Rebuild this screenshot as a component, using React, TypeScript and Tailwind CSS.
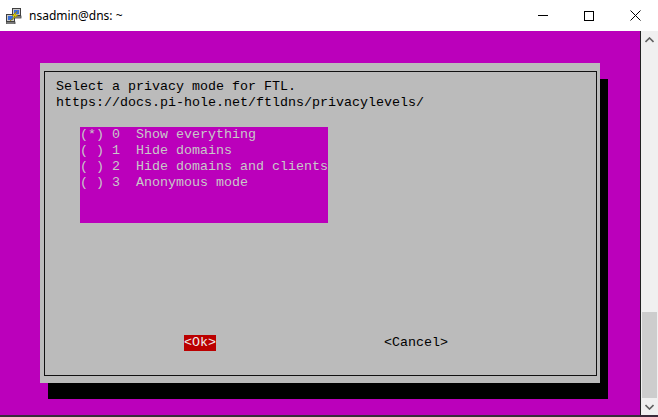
import React from "react";

const PuttyIcon = () => (
  <svg width="16" height="16" viewBox="0 0 16 16">
    <rect x="6.5" y="0.5" width="8" height="7" fill="#c8c8c8" stroke="#404040" />
    <rect x="8" y="2" width="5" height="4" fill="#3a6fd8" />
    <rect x="6" y="8" width="9" height="2" fill="#a0a0a0" stroke="#404040" strokeWidth="0.8" />
    <rect x="0.5" y="6.5" width="8" height="7" fill="#c8c8c8" stroke="#404040" />
    <rect x="2" y="8" width="5" height="4" fill="#3a6fd8" />
    <rect x="0" y="14" width="9" height="2" fill="#a0a0a0" stroke="#404040" strokeWidth="0.8" />
    <path d="M11 3 L6 8 L9 8 L4 13 L12 7 L9 7 Z" fill="#f5e400" stroke="#8a7a00" strokeWidth="0.6" />
  </svg>
);

const TitleBar = () => (
  <div className="h-[31px] bg-white flex items-center">
    <div className="ml-[6px] mr-[7px] flex">
      <PuttyIcon />
    </div>
    <span className="text-[12px] text-black" style={{ fontFamily: '"Noto Sans", "Open Sans", sans-serif' }}>
      nsadmin@dns: ~
    </span>
    <div className="ml-auto flex items-center h-full">
      <div className="w-[46px] h-full flex items-center justify-center">
        <div className="w-[10px] h-px bg-black" />
      </div>
      <div className="w-[46px] h-full flex items-center justify-center">
        <div className="w-[10px] h-[10px] border border-black" />
      </div>
      <div className="w-[46px] h-full flex items-center justify-center">
        <svg width="11" height="11" viewBox="0 0 11 11">
          <path d="M0.5 0.5 L10.5 10.5 M10.5 0.5 L0.5 10.5" stroke="#000" strokeWidth="1" />
        </svg>
      </div>
    </div>
  </div>
);

const options = [
  { mark: "(*)", n: "0", label: "Show everything" },
  { mark: "( )", n: "1", label: "Hide domains" },
  { mark: "( )", n: "2", label: "Hide domains and clients" },
  { mark: "( )", n: "3", label: "Anonymous mode" },
];

const Dialog = () => (
  <div className="w-[560px] h-[320px] bg-[#bbbbbb] shadow-[8px_16px_0_0_#000] pl-[4px] pr-[3px] pt-[8px] pb-[7px] flex">
    <div className="flex-1 border border-[#111] pl-[11px] pt-[7px] flex flex-col">
      <div className="h-[16px] leading-[16px] whitespace-pre text-black">Select a privacy mode for FTL.</div>
      <div className="h-[16px] leading-[16px] whitespace-pre text-black">https://docs.pi-hole.net/ftldns/privacylevels/</div>
      <div className="ml-[24px] mt-[16px] w-[248px] h-[96px] bg-[#bb00bb] text-[#c8c8c8]">
        {options.map((o) => (
          <div key={o.n} className="h-[16px] leading-[16px] whitespace-pre">
            {`${o.mark} ${o.n}  ${o.label}`}
          </div>
        ))}
      </div>
      <div className="mt-[112px] h-[16px] leading-[16px] flex whitespace-pre">
        <span className="ml-[128px] bg-[#bb0000] text-[#eeeeee]">{"<Ok>"}</span>
        <span className="ml-[168px] text-black">{"<Cancel>"}</span>
      </div>
    </div>
  </div>
);

const Scrollbar = () => (
  <div className="w-[17px] h-full bg-[#f0f0f0] flex flex-col items-center">
    <div className="h-[17px] flex items-center justify-center">
      <svg width="9" height="6" viewBox="0 0 9 6">
        <path d="M0.5 5 L4.5 1 L8.5 5" stroke="#606060" strokeWidth="1.6" fill="none" />
      </svg>
    </div>
    <div className="flex-1 w-full flex flex-col justify-end px-[1px]">
      <div className="h-[86px] bg-[#cdcdcd]" />
    </div>
    <div className="h-[17px] flex items-center justify-center">
      <svg width="9" height="6" viewBox="0 0 9 6">
        <path d="M0.5 1 L4.5 5 L8.5 1" stroke="#606060" strokeWidth="1.6" fill="none" />
      </svg>
    </div>
  </div>
);

export default function App() {
  return (
    <div className="w-[658px] h-[417px] bg-white flex flex-col overflow-hidden">
      <TitleBar />
      <div className="h-[384px] flex">
        <div
          className="w-[640px] h-full bg-[#bb00bb] pl-[40px] pt-[32px] text-[13.333px]"
          style={{ fontFamily: '"Liberation Mono", "Courier New", monospace' }}
        >
          <Dialog />
        </div>
        <div className="w-px h-full bg-[#222]" />
        <Scrollbar />
      </div>
      <div className="flex-1 bg-[#3a2a3a]" />
    </div>
  );
}
